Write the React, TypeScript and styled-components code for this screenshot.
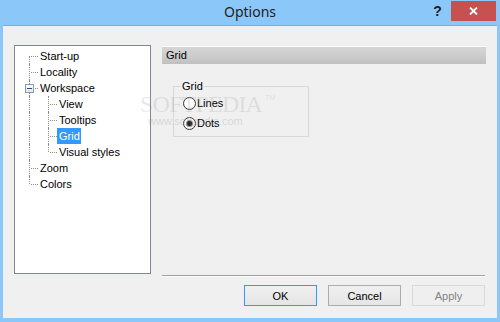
import React from "react";
import styled, { createGlobalStyle, css } from "styled-components";

const Global = createGlobalStyle`
  html, body { margin: 0; padding: 0; background: #8bc7f8; }
  body { font-family: "Liberation Sans", Arial, sans-serif; font-size: 11px; color: #000; }
  * { box-sizing: border-box; }
`;

const Window = styled.div`
  position: relative;
  width: 500px;
  height: 322px;
  background: #8bc7f8;
  display: flex;
  flex-direction: column;
  overflow: hidden;
`;

const TitleBar = styled.div`
  height: 25px;
  flex: none;
  display: grid;
  grid-template-columns: 1fr auto 1fr;
  align-items: start;
`;

const Title = styled.div`
  grid-column: 2;
  font-family: "Noto Sans", "Open Sans", sans-serif;
  font-size: 14px;
  line-height: 20px;
  padding-top: 2px;
  color: #1e1e1e;
`;

const Controls = styled.div`
  grid-column: 3;
  justify-self: end;
  display: flex;
  align-items: flex-start;
  margin-right: 4px;
  margin-top: 1px;
`;

const HelpButton = styled.div`
  width: 27px;
  height: 20px;
  display: flex;
  align-items: center;
  justify-content: center;
  font-family: "Liberation Sans", Arial, sans-serif;
  font-weight: bold;
  font-size: 14px;
  color: #1e1e1e;
  padding-bottom: 1px;
`;

const CloseButton = styled.div`
  width: 45px;
  height: 20px;
  background: #c75050;
  display: flex;
  align-items: center;
  justify-content: center;
`;

const Body = styled.div`
  flex: 1;
  margin: 0 3px 4px 3px;
  background: #f0f0f0;
  border-top: 1px solid #79aedd;
  padding: 19px 11px 12px 11px;
  display: flex;
  flex-direction: column;
`;

const TopRow = styled.div`
  height: 232px;
  display: flex;
  gap: 11px;
`;

const Tree = styled.div`
  width: 137px;
  height: 229px;
  flex: none;
  background: #fff;
  border: 1px solid #828790;
  padding: 2px 0 0 5px;
  display: flex;
  flex-direction: column;
`;

const TreeRow = styled.div`
  height: 16px;
  display: flex;
  align-items: flex-start;
`;

const Cell = styled.div<{ $up?: boolean; $down?: boolean; $right?: boolean }>`
  position: relative;
  width: 19px;
  height: 16px;
  flex: none;
  ${(p) =>
    (p.$up || p.$down) &&
    css`
      &::before {
        content: "";
        position: absolute;
        left: 9px;
        top: ${p.$up ? 0 : 8}px;
        bottom: ${p.$down ? 0 : 8}px;
        border-left: 1px dotted #8a8a8a;
      }
    `}
  ${(p) =>
    p.$right &&
    css`
      &::after {
        content: "";
        position: absolute;
        left: 11px;
        top: 8px;
        width: 7px;
        border-top: 1px dotted #8a8a8a;
      }
    `}
`;

const Expander = styled.div`
  position: absolute;
  left: 5px;
  top: 4px;
  width: 9px;
  height: 9px;
  border: 1px solid #8e9aa8;
  background: linear-gradient(#ffffff, #e4e4e4);
  z-index: 1;
  &::after {
    content: "";
    position: absolute;
    left: 1px;
    top: 3px;
    width: 5px;
    height: 1px;
    background: #2b4a8a;
  }
`;

const Label = styled.span<{ $selected?: boolean }>`
  height: 16px;
  line-height: 16px;
  padding: 0 1px 0 2px;
  margin-left: -1px;
  white-space: nowrap;
  ${(p) =>
    p.$selected &&
    css`
      background: #3399ff;
      color: #fff;
    `}
`;

const RightCol = styled.div`
  flex: 1;
  display: flex;
  flex-direction: column;
`;

const SectionHeader = styled.div`
  margin-top: 1px;
  height: 18px;
  border-top: 1px solid #ffffff;
  background: linear-gradient(#d6d6d6, #c8c8c8 70%, #bfbfbf);
  padding-left: 4px;
  line-height: 17px;
`;

const Group = styled.fieldset`
  margin: 16px 0 0 11px;
  width: 136px;
  min-width: 0;
  border: 1px solid #d8d8d8;
  padding: 1px 0 3px 9px;
`;

const Legend = styled.legend`
  padding: 0 1px;
  margin-left: -2px;
  line-height: 12px;
`;

const RadioRow = styled.label`
  height: 20px;
  display: flex;
  align-items: center;
`;

const RadioCircle = styled.span<{ $checked?: boolean }>`
  position: relative;
  width: 13px;
  height: 13px;
  border-radius: 50%;
  border: 1px solid #3a3a3a;
  background: radial-gradient(circle at 50% 40%, #ffffff 40%, #e6e6e6);
  margin-right: 1px;
  flex: none;
  ${(p) =>
    p.$checked &&
    css`
      &::after {
        content: "";
        position: absolute;
        left: 3px;
        top: 3px;
        width: 5px;
        height: 5px;
        border-radius: 50%;
        background: #1f1f1f;
        box-shadow: 0 0 0 1px #8c8c8c;
      }
    `}
`;

const Separator = styled.div`
  margin-top: auto;
  margin-right: 1px;
  border-top: 1px solid #a0a0a0;
  border-bottom: 1px solid #ffffff;
`;

const ButtonRow = styled.div`
  margin-top: 8px;
  display: flex;
  justify-content: flex-end;
  gap: 11px;
  padding-right: 1px;
`;

const Button = styled.div<{ $variant?: "default" | "normal" | "disabled" }>`
  width: 73px;
  height: 21px;
  display: flex;
  align-items: center;
  justify-content: center;
  background: linear-gradient(#f0f0f0, #e5e5e5);
  border: 1px solid #acacac;
  color: #000;
  ${(p) =>
    p.$variant === "default" &&
    css`
      border-color: #3399ff;
    `}
  ${(p) =>
    p.$variant === "disabled" &&
    css`
      background: #efefef;
      border-color: #d9d9d9;
      color: #838383;
    `}
`;

const Watermark = styled.div`
  position: absolute;
  left: 140px;
  top: 86px;
  font-family: "Liberation Serif", serif;
  font-size: 24px;
  line-height: 24px;
  letter-spacing: -0.8px;
  color: rgba(150, 150, 150, 0.22);
  pointer-events: none;
  white-space: nowrap;
`;

const Tm = styled.sup`
  font-family: "Liberation Sans", sans-serif;
  font-size: 7px;
  letter-spacing: 0;
  vertical-align: 12px;
  margin-left: 3px;
`;

const WatermarkUrl = styled.div`
  position: absolute;
  left: 148px;
  top: 116px;
  font-family: "Liberation Sans", sans-serif;
  font-size: 11px;
  line-height: 11px;
  color: rgba(150, 150, 150, 0.3);
  pointer-events: none;
  white-space: nowrap;
`;

type Node = {
  label: string;
  cells: { up?: boolean; down?: boolean; right?: boolean; expander?: boolean }[];
  selected?: boolean;
};

const nodes: Node[] = [
  { label: "Start-up", cells: [{ down: true, right: true }] },
  { label: "Locality", cells: [{ up: true, down: true, right: true }] },
  { label: "Workspace", cells: [{ up: true, down: true, right: true, expander: true }] },
  { label: "View", cells: [{ up: true, down: true }, { up: true, down: true, right: true }] },
  { label: "Tooltips", cells: [{ up: true, down: true }, { up: true, down: true, right: true }] },
  { label: "Grid", selected: true, cells: [{ up: true, down: true }, { up: true, down: true, right: true }] },
  { label: "Visual styles", cells: [{ up: true, down: true }, { up: true, right: true }] },
  { label: "Zoom", cells: [{ up: true, down: true, right: true }] },
  { label: "Colors", cells: [{ up: true, right: true }] },
];

export default function App() {
  return (
    <>
      <Global />
      <Window>
        <TitleBar>
          <Title>Options</Title>
          <Controls>
            <HelpButton>?</HelpButton>
            <CloseButton>
              <svg width="9" height="8" viewBox="0 0 9 8">
                <path d="M1 0.5 L8 7.5 M8 0.5 L1 7.5" stroke="#fff" strokeWidth="1.8" />
              </svg>
            </CloseButton>
          </Controls>
        </TitleBar>
        <Body>
          <TopRow>
            <Tree>
              {nodes.map((n) => (
                <TreeRow key={n.label}>
                  {n.cells.map((c, i) => (
                    <Cell key={i} $up={c.up} $down={c.down} $right={c.right}>
                      {c.expander && <Expander />}
                    </Cell>
                  ))}
                  <Label $selected={n.selected}>{n.label}</Label>
                </TreeRow>
              ))}
            </Tree>
            <RightCol>
              <SectionHeader>Grid</SectionHeader>
              <Group>
                <Legend>Grid</Legend>
                <RadioRow>
                  <RadioCircle />
                  Lines
                </RadioRow>
                <RadioRow>
                  <RadioCircle $checked />
                  Dots
                </RadioRow>
              </Group>
              <Separator />
            </RightCol>
          </TopRow>
          <ButtonRow>
            <Button $variant="default">OK</Button>
            <Button>Cancel</Button>
            <Button $variant="disabled">Apply</Button>
          </ButtonRow>
        </Body>
        <Watermark>
          SOFTPEDIA<Tm>TM</Tm>
        </Watermark>
        <WatermarkUrl>www.softpedia.com</WatermarkUrl>
      </Window>
    </>
  );
}
